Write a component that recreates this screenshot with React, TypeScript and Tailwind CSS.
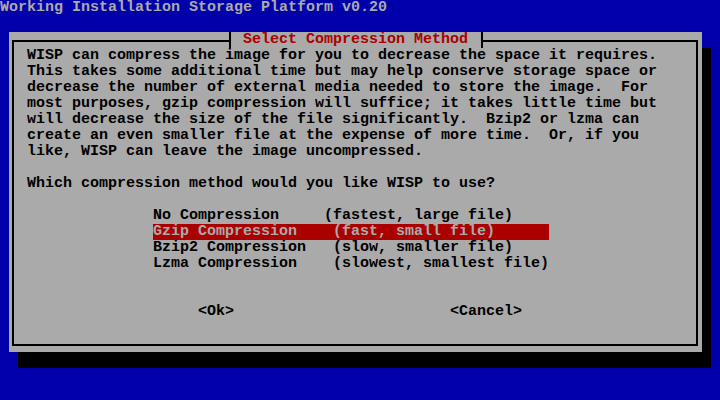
const paragraph = [
  "WISP can compress the image for you to decrease the space it requires.",
  "This takes some additional time but may help conserve storage space or",
  "decrease the number of external media needed to store the image.  For",
  "most purposes, gzip compression will suffice; it takes little time but",
  "will decrease the size of the file significantly.  Bzip2 or lzma can",
  "create an even smaller file at the expense of more time.  Or, if you",
  "like, WISP can leave the image uncompressed.",
];

const options = [
  { tag: "No Compression     ", desc: "(fastest, large file)" },
  { tag: "Gzip Compression    ", desc: "(fast, small file)" },
  { tag: "Bzip2 Compression   ", desc: "(slow, smaller file)" },
  { tag: "Lzma Compression    ", desc: "(slowest, smallest file)" },
];

function Line({ children }: { children?: React.ReactNode }) {
  return <div className="h-4 leading-4 whitespace-pre">{children}</div>;
}

export default function App() {
  const selected = 1;

  return (
    <div
      className="w-[720px] h-[400px] bg-[#0000aa] text-[15px] font-bold overflow-hidden"
      style={{ fontFamily: '"Liberation Mono", "DejaVu Sans Mono", monospace' }}
    >
      <div className="h-4 leading-4 text-[#aaaaaa] whitespace-pre">Working Installation Storage Platform v0.20</div>
      <div className="h-4" />

      {/* dialog */}
      <div className="relative ml-[9px] w-[693px] h-[320px] bg-[#aaaaaa] shadow-[9px_16px_0_0_#000] pt-[8px] pl-[3px] pr-[4px] pb-[6px]">
        <div className="h-full border-2 border-black pt-[6px] pl-[13px] text-black">
          {paragraph.map((l) => (
            <Line key={l}>{l}</Line>
          ))}
          <Line />
          <Line>Which compression method would you like WISP to use?</Line>
          <Line />
          <div className="ml-[126px] w-[396px] flex flex-col">
            {options.map((o, i) => (
              <div
                key={o.tag}
                className={
                  i === selected
                    ? "h-4 leading-4 whitespace-pre bg-[#aa0000] text-[#aaaaaa]"
                    : "h-4 leading-4 whitespace-pre"
                }
              >
                {o.tag}
                {o.desc}
              </div>
            ))}
          </div>
          <Line />
          <Line />
          <div className="h-4 leading-4 flex whitespace-pre">
            <span className="ml-[171px]">&lt;Ok&gt;</span>
            <span className="ml-[216px]">&lt;Cancel&gt;</span>
          </div>
        </div>

        {/* title over the top border */}
        <div className="absolute left-[220px] top-0 h-4 w-[254px] border-l-2 border-r-2 border-black bg-[#aaaaaa] pl-[12px] leading-4 text-[#aa0000] whitespace-pre">
          Select Compression Method
        </div>
      </div>
    </div>
  );
}
